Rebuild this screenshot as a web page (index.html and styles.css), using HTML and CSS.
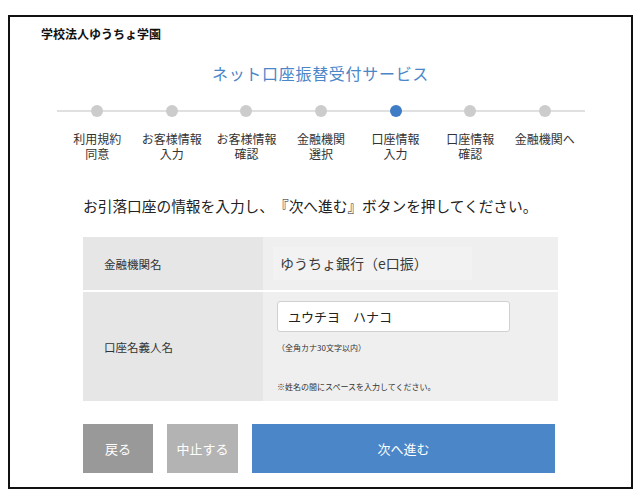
FILE: index.html
```html
<!DOCTYPE html>
<html lang="ja">
<head>
    <meta charset="UTF-8">
    <title>ネット口座振替受付サービス</title>
    <link rel="stylesheet" href="styles.css">
</head>
<body>
    <div class="frame">
        <div class="school">学校法人ゆうちょ学園</div>
        <h1 class="service">ネット口座振替受付サービス</h1>

        <ol class="steps">
            <li class="step"><span class="dot"></span><span class="step-label"><span>利用規約</span><span>同意</span></span></li>
            <li class="step"><span class="dot"></span><span class="step-label"><span>お客様情報</span><span>入力</span></span></li>
            <li class="step"><span class="dot"></span><span class="step-label"><span>お客様情報</span><span>確認</span></span></li>
            <li class="step"><span class="dot"></span><span class="step-label"><span>金融機関</span><span>選択</span></span></li>
            <li class="step active"><span class="dot"></span><span class="step-label"><span>口座情報</span><span>入力</span></span></li>
            <li class="step"><span class="dot"></span><span class="step-label"><span>口座情報</span><span>確認</span></span></li>
            <li class="step"><span class="dot"></span><span class="step-label"><span>金融機関へ</span></span></li>
        </ol>

        <p class="lead">お引落口座の情報を入力し、『次へ進む』ボタンを押してください。</p>

        <div class="form-table">
            <div class="form-label row-bank">金融機関名</div>
            <div class="form-value row-bank">
                <div class="bank-name">ゆうちょ銀行（e口振）</div>
            </div>
            <div class="form-label row-holder">口座名義人名</div>
            <div class="form-value row-holder holder">
                <input type="text" class="text-input" value="ユウチヨ　ハナコ">
                <p class="note note-kana">（全角カナ30文字以内）</p>
                <p class="note">※姓名の間にスペースを入力してください。</p>
            </div>
        </div>

        <div class="actions">
            <button type="button" class="btn btn-back">戻る</button>
            <button type="button" class="btn btn-cancel">中止する</button>
            <button type="button" class="btn btn-next">次へ進む</button>
        </div>
    </div>
</body>
</html>
```

FILE: styles.css
```css
body {
    font-family: "Noto Sans CJK JP", "Noto Sans", sans-serif;
    background-color: #ffffff;
    color: #333333;
    margin: 0;
    padding: 0;
    text-spacing-trim: space-all;
}
.frame {
    box-sizing: border-box;
    width: 625px;
    height: 474px;
    margin: 15px 0 0 8px;
    border: 2px solid #111111;
    padding-top: 10px;
}
.school {
    margin-left: 31px;
    font-size: 12px;
    line-height: 14px;
    font-weight: bold;
    color: #111111;
}
.service {
    margin: 22px 0 0 0;
    text-align: center;
    font-size: 16px;
    line-height: 20px;
    font-weight: normal;
    letter-spacing: 0.7px;
    color: #4a86c8;
}
.steps {
    position: relative;
    display: grid;
    grid-template-columns: repeat(7, 1fr);
    width: 522px;
    margin: 22px 0 0 50px;
    padding: 0;
    list-style: none;
}
.steps::before {
    content: "";
    position: absolute;
    top: 5px;
    left: -3px;
    right: -3px;
    height: 2px;
    background-color: #e0e0e0;
}
.step {
    position: relative;
    display: flex;
    flex-direction: column;
    align-items: center;
}
.dot {
    width: 12px;
    height: 12px;
    border-radius: 50%;
    background-color: #cccccc;
}
.step.active .dot {
    background-color: #3f7cc6;
}
.step-label {
    display: flex;
    flex-direction: column;
    align-items: center;
    gap: 2px;
    margin-top: 15px;
    font-size: 12px;
    line-height: 13px;
    color: #333333;
}
.lead {
    margin: 36px 0 0 73px;
    font-size: 14.7px;
    line-height: 20px;
    color: #222222;
}
.form-table {
    display: grid;
    grid-template-columns: 180px 1fr;
    grid-template-rows: 53px 109px;
    row-gap: 2px;
    width: 475px;
    margin: 21px 0 0 73px;
}
.form-label {
    display: flex;
    align-items: center;
    padding-left: 21px;
    background-color: #e6e6e6;
    font-size: 11.5px;
    color: #333333;
}
.form-value {
    background-color: #efefef;
}
.row-bank.form-value {
    display: flex;
    align-items: center;
    padding-left: 10px;
}
.bank-name {
    width: 192px;
    height: 33px;
    padding-left: 7px;
    background-color: #f2f2f2;
    font-size: 14px;
    line-height: 33px;
    color: #3a3a3a;
}
.holder {
    padding: 9px 0 0 14px;
}
.text-input {
    box-sizing: border-box;
    width: 233px;
    height: 31px;
    margin: 0;
    padding: 0 10px;
    border: 1px solid #d0d0d0;
    border-radius: 3px;
    background-color: #ffffff;
    font-family: inherit;
    font-size: 13px;
    color: #222222;
}
.note {
    margin: 0;
    font-size: 8px;
    line-height: 12px;
    color: #333333;
}
.note-kana {
    margin: 10px 0 27px 0;
}
.actions {
    display: flex;
    gap: 14px;
    width: 472px;
    margin: 23px 0 0 73px;
}
.btn {
    height: 49px;
    border: none;
    padding: 0;
    font-family: inherit;
    font-size: 13px;
    color: #ffffff;
}
.btn-back {
    width: 70px;
    background-color: #999999;
}
.btn-cancel {
    width: 71px;
    background-color: #b3b3b3;
}
.btn-next {
    flex: 1;
    background-color: #4a86c8;
}
```
